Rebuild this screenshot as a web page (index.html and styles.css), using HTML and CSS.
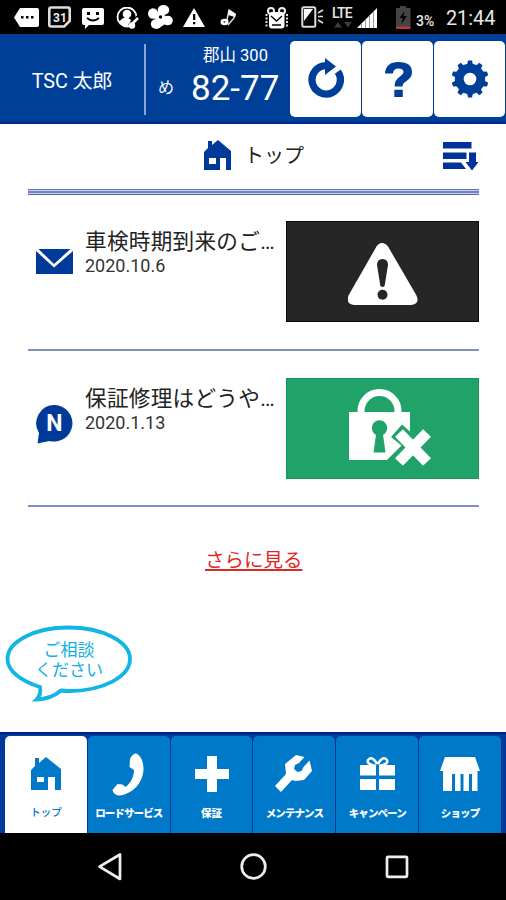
FILE: index.html
```html
<!DOCTYPE html>
<html lang="ja">
<head>
<meta charset="utf-8">
<title>トップ</title>
<link rel="stylesheet" href="styles.css">
</head>
<body>
<div class="screen">
  <div class="status">
    <svg class="s-tag" width="25" height="19" viewBox="14 8 25 19"><path fill="#fff" d="M20 8h17q2 0 2 2v15q0 2-2 2H20l-6-9.500z"/><path fill="#000" d="M21 16h2.500v2.500H21zM26 16h2.500v2.500H26zM31 16h2.500v2.500H31z"/></svg>
    <svg class="s-cal" width="23" height="22" viewBox="48 6 23 22"><path fill="#000" stroke="#ddd" stroke-width="2.600" d="M51 7.500h17q1.700 0 1.700 1.700V21l-5.500 5.500H51q-1.700 0-1.700-1.700V9.200q0-1.700 1.700-1.700z"/><text class="cal-num" x="53" y="21.500">31</text></svg>
    <svg class="s-msg" width="23" height="21" viewBox="82 8 23 21"><path fill="#fff" d="M84 8h18q2 0 2 2v13q0 2-2 2H89l-4 4v-4h-1q-2 0-2-2V10q0-2 2-2z"/><path fill="#000" d="M87 12h3v3h-3zM96 12h3v3h-3z"/><path stroke="#000" stroke-width="1.800" fill="none" d="M87 18q6 5 12 0"/></svg>
    <svg class="s-user" width="24" height="23" viewBox="116 7 24 23"><circle cx="127" cy="17" r="9.500" fill="#000" stroke="#fff" stroke-width="1.800"/><circle cx="127" cy="14" r="4.300" fill="#fff"/><path fill="#fff" d="M119 22q4-5 8-5l4 3-3 7q-6 0-9-5z"/><path stroke="#000" stroke-width="5" d="m139 17-9 9"/><path stroke="#fff" stroke-width="2.500" fill="none" d="m138 18-6 6"/><circle cx="132" cy="25.500" r="3.200" fill="#fff"/></svg>
    <svg class="s-fan" width="26" height="25" viewBox="148 5 26 25"><g fill="#fff"><ellipse cx="163.500" cy="10" rx="5.800" ry="5"/><ellipse cx="153" cy="13.500" rx="5" ry="5.300"/><ellipse cx="167.800" cy="20.500" rx="5" ry="4.800"/><ellipse cx="156.300" cy="24" rx="5.500" ry="5"/><path d="m152 17 8-7 10 11-11 7 1-7z"/></g><circle cx="160.500" cy="17" r="1.700" fill="#000"/></svg>
    <svg class="s-warn" width="22" height="19" viewBox="183 8 22 19"><path fill="#fff" d="m194 8 11 19h-22z"/><path fill="#000" d="M193 14h2.300v6H193zM193 22h2.300v2.300H193z"/></svg>
    <svg class="s-note" width="17" height="18" viewBox="220 9 17 18"><path fill="none" stroke="#ddd" stroke-width="1.500" d="m227 20 2-10 6 4-1 4-6 7"/><ellipse cx="224.500" cy="22" rx="4" ry="3.300" fill="#fff"/><path fill="#fff" d="m229 10 7 4-1 3-7-2z"/><circle cx="224.500" cy="22" r="1" fill="#555"/></svg>
    <svg class="s-gift" width="23" height="23" viewBox="265 6 23 23"><circle cx="271" cy="11" r="3" fill="none" stroke="#eee" stroke-width="2"/><circle cx="282" cy="11" r="3" fill="none" stroke="#eee" stroke-width="2"/><rect x="269" y="12" width="15.500" height="16.500" rx="3" fill="#fff"/><path stroke="#000" stroke-width="1.300" fill="none" d="m271 16 5.500 5 5.500-5M272 25h9"/><path stroke="#ddd" stroke-width="2" stroke-dasharray="2 1.500" d="M266.500 14v14M287 14v14"/></svg>
    <svg class="s-phone" width="23" height="22" viewBox="301 6 23 22"><rect x="302.300" y="7.300" width="13" height="19.500" rx="1.500" fill="#000" stroke="#ddd" stroke-width="2"/><path fill="#fff" d="M304 9h9l-9 12z"/><path stroke="#ddd" stroke-width="1.600" d="m318 13 5-3M318 16.500h5M318 20l5 3"/></svg>
    <div class="lte"><span>LTE</span><svg width="18" height="6" viewBox="0 0 18 6"><path fill="#3c3c3c" d="M0 5.500 4 0l4 5.500zM10 0h8l-4 5.500z"/></svg></div>
    <svg class="s-signal" width="21" height="20" viewBox="357 8 21 20"><path fill="#fff" d="M377 8v20h-20z"/><path stroke="#999" d="M361.500 23v5M365.500 19v9M369.500 15v13M373.500 11v17"/></svg>
    <svg class="s-batt" width="15" height="23" viewBox="396 6 15 23"><path fill="#444" d="M400 6h6v2h4.500v19H396V8h4z"/><path fill="#b83a32" d="M396 26.500h14.500V29H396z"/><path fill="#000" d="m404.500 11-5 7h3l-1 6 5.500-8h-3.500z"/></svg>
    <span class="pct">3%</span>
    <span class="clock">21:44</span>
  </div>

  <header class="header">
    <div class="user">TSC 太郎</div>
    <div class="plate">
      <span class="kana">め</span>
      <div class="plate-main"><span class="region">郡山 300</span><span class="number">82-77</span></div>
    </div>
    <div class="actions">
      <div class="action"><svg width="40" height="44" viewBox="305 57 40 44"><path fill="none" stroke="#003f98" stroke-width="7.300" d="M336.800 71.600A14.200 14.200 0 1 1 325 65.600"/><path fill="#003f98" d="m324 58 11 8.500-11 8.500z"/></svg></div>
      <div class="action"><svg width="30" height="38" viewBox="382 60 30 38"><path fill="#003f98" d="M384 73.500q.8-11.500 13.500-11.500Q411 62 411 72.300q0 5.200-5.500 8.700-4 2.300-4 5.500h-8q0-6.500 5.500-10 3.500-2 3.500-4.300 0-3.700-5-3.700-5.200 0-5.500 5zM393.300 89.700h8.500V97h-8.500z"/></svg></div>
      <div class="action"><svg width="38" height="38" viewBox="-19 -19 38 38"><g fill="#003f98"><circle r="15.200"/><path d="M-3-14l1-4.500h4l1 4.500zM-3 14l1 4.500h4l1-4.500z"/><path transform="rotate(36)" d="M-3-14l1-4.500h4l1 4.500zM-3 14l1 4.500h4l1-4.500z"/><path transform="rotate(72)" d="M-3-14l1-4.500h4l1 4.500zM-3 14l1 4.500h4l1-4.500z"/><path transform="rotate(108)" d="M-3-14l1-4.500h4l1 4.500zM-3 14l1 4.500h4l1-4.500z"/><path transform="rotate(144)" d="M-3-14l1-4.500h4l1 4.500zM-3 14l1 4.500h4l1-4.500z"/></g><circle r="6.300" fill="#fff"/></svg></div>
    </div>
  </header>

  <main class="main">
    <div class="title-row">
      <div class="title"><svg width="28" height="30" viewBox="0 0 28 30"><path fill="#003a98" fill-rule="evenodd" d="M4 1h4v4l6-5 13 11v19h-5V18h-6v12H0V12l4-4zM5 18v6h7v-6z"/></svg><span>トップ</span></div>
      <svg class="sort" width="36" height="29" viewBox="0 0 36 29"><path fill="#00329a" d="M0 0h28.500v6.500H0zM0 10.500h23.500V17H0zM0 20.500h18l5 6.500H0zM26 10.500h7V20h2.500L29 28.500 22.500 20H26z"/></svg>
    </div>
    <div class="rule"></div>

    <article class="item">
      <svg class="item-icon" width="37" height="25" viewBox="0 0 37 25"><path fill="#003a98" d="M2.500 0h32L18 15zM0 2l18 16.500L37 2v23H0z"/></svg>
      <div class="item-text"><h2>車検時期到来のご…</h2><time>2020.10.6</time></div>
      <div class="thumb dark"><svg width="70" height="64" viewBox="348 241 70 64"><path fill="#fff" d="M376.500 245.500q2-3.500 5.500-3.500t6 3.500l28.500 49q3.500 8.500-5 9.500H354q-8.500-1-5.500-9.500z"/><path fill="#262626" d="M377 264q0-6 5.500-6t5.500 6l-3.300 20.500q-2.200 3-4.400 0z"/><circle cx="382.500" cy="293.700" r="5" fill="#262626"/></svg></div>
    </article>

    <article class="item">
      <svg class="item-icon bubble-n" width="37" height="39" viewBox="0 0 37 39"><path fill="#003a98" d="M18.500 0a18.300 18.300 0 1 1-5 36Q7 37 1.500 38.500L3 28A18.300 18.300 0 0 1 18.500 0z"/><text x="18.300" y="26">N</text></svg>
      <div class="item-text"><h2>保証修理はどうや…</h2><time>2020.1.13</time></div>
      <div class="thumb green"><svg width="84" height="78" viewBox="348 389 84 78"><path fill="none" stroke="#fff" stroke-width="7" d="M361 414v-3a18.500 18.500 0 0 1 37 0v3"/><path fill="#fff" d="M349 412h61v48h-61z"/><path fill="#20a268" d="m391 437 11-12.500 9 8 5 34h-30l-1.500-4 17-17z"/><circle cx="379.500" cy="428" r="7.700" fill="#20a268"/><path fill="#20a268" d="M376.500 431h6l3 21.500h-12z"/><path stroke="#fff" stroke-width="11" d="m399 433 28 29M427 433l-28 29"/></svg></div>
    </article>

    <a class="more">さらに見る</a>

    <div class="consult">
      <svg width="128" height="78" viewBox="5 624 128 78"><path fill="#fff" stroke="#12b5e4" stroke-width="3.800" d="M40 687C21 681 7.500 671 7.500 659c0-17.500 27-31.500 61-31.500s61.500 14 61.500 31.500-27 32-61 32q-4.500 0-8-.5-10 8.500-24.500 9 5-5 3.500-12.500z"/></svg>
      <div class="consult-text">ご相談<br>ください</div>
    </div>
  </main>

  <nav class="tabs">
    <div class="tab active"><svg width="30" height="34" viewBox="0 -1 30 34"><path fill="#0079c8" fill-rule="evenodd" d="M4 0h4v5l7-6 15 12v21h-6V19h-7v13H0V12l4-4zM6 19v5h7v-5z"/></svg><span>トップ</span></div>
    <div class="tab"><svg width="34" height="43" viewBox="113 751 34 43"><path fill="#fff" d="M131 757q2.500-5.500 6-5.500c4 1.500 7.500 7 7.500 15 0 14-11 26-24.500 27-3 0-6-2.500-6.500-5.500l5-6 5 .5 3 2.500c5-4 8.500-10 8.500-17l-4.500-3z"/></svg><span class="tight">ロードサービス</span></div>
    <div class="tab"><svg width="34" height="36" viewBox="0 0 34 36"><path fill="#fff" d="M12 0h10v13h12v10H22v13H12V23H0V13h12z"/></svg><span>保証</span></div>
    <div class="tab"><svg width="38" height="38" viewBox="276 755 38 38"><path fill="#fff" d="m297 755 8.500 2-5.500 6-4 2-1 4 3.500 3 4-1 2-4 6-6.500L313 771l-8 9-9 1-3-1-11 12-6-6 11-12-1-10z"/></svg><span class="tight">メンテナンス</span></div>
    <div class="tab"><svg width="35" height="34" viewBox="0 0 35 34"><path fill="#fff" d="M0 8h16v10.500H0zM19 8h16v10.500H19zM0 22h16v11H0zM19 22h16v11H19z"/><path fill="none" stroke="#fff" stroke-width="2.500" d="M16 9Q6 7 8 3q4-4.500 8.500 3h2Q23-1.500 27 3q2 4-8 6"/></svg><span class="tight">キャンペーン</span></div>
    <div class="tab"><svg width="40" height="34" viewBox="0 0 40 34"><path fill="#fff" d="M5 0h30l5 14h-2.500v20H32V17h-3v17h-5.500V17h-3v17h-5.500V17h-3v17H3V14H0z"/></svg><span class="tight">ショップ</span></div>
  </nav>

  <div class="sysnav">
    <svg width="506" height="67" viewBox="0 833 506 67" fill="none" stroke="#eee" stroke-width="2.700"><path d="M120 854.500v24.500l-20.500-12.300z" stroke-linejoin="round"/><circle cx="253.500" cy="866.500" r="11.800"/><rect x="387" y="856.800" width="20" height="20" rx="1"/></svg>
  </div>
</div>
</body>
</html>
```

FILE: styles.css
```css
* { box-sizing: border-box; }
body { margin: 0; font-family: Roboto, "Noto Sans CJK JP", sans-serif; background: #fff; }
svg { display: block; flex: none; }
.screen { width: 506px; height: 900px; display: flex; flex-direction: column; overflow: hidden; }

.status { height: 34px; background: #000; display: flex; align-items: flex-start; color: #e8e8e8; flex: none; }
.s-tag { margin: 8px 0 0 14px; }
.s-cal { margin: 6px 0 0 9px; }
.cal-num { font: 700 12px Roboto, sans-serif; fill: #eee; }
.s-msg { margin: 8px 0 0 11px; }
.s-user { margin: 7px 0 0 11px; }
.s-fan { margin: 5px 0 0 8px; }
.s-warn { margin: 8px 0 0 9px; }
.s-note { margin: 9px 0 0 15px; }
.s-gift { margin: 6px 0 0 28px; }
.s-phone { margin: 6px 0 0 13px; }
.lte { margin: 5px 0 0 8px; width: 22px; font-size: 14px; line-height: 16px; font-weight: 500; letter-spacing: -0.8px; flex: none; }
.lte svg { margin: 1px 0 0 2px; }
.s-signal { margin: 8px 0 0 3px; }
.s-batt { margin: 6px 0 0 18px; }
.pct { margin: 13px 0 0 5px; width: 25px; font-size: 14px; line-height: 16px; font-weight: 500; }
.clock { margin: 7px 0 0 5px; font-size: 19.800px; line-height: 23px; }

.header { height: 90px; background: #003f98; border-bottom: 2px solid #00288c; display: flex; color: #fff; flex: none; padding-top: 7px; }
.user { width: 146px; height: 71px; margin-top: 3px; border-right: 2px solid #8aa4d6; display: flex; align-items: center; justify-content: center; font-size: 19.800px; padding-bottom: 1px; }
.plate { width: 144px; display: flex; padding-left: 12px; }
.kana { width: 16px; padding-top: 35px; font-size: 16px; line-height: 24px; }
.plate-main { display: flex; flex-direction: column; width: 108px; padding-left: 17px; }
.region { margin: 4px 0 0 12px; font-size: 16.500px; line-height: 22px; white-space: nowrap; }
.number { font-size: 35px; line-height: 42px; margin-top: 1px; white-space: nowrap; }
.actions { display: flex; gap: 1px; }
.action { width: 71px; height: 76px; background: #fff; border-radius: 5px; display: flex; align-items: center; justify-content: center; }

.main { height: 608px; padding: 0 27px 0 28px; position: relative; flex: none; }
.title-row { height: 65px; display: flex; justify-content: space-between; padding-left: 176px; }
.title { display: flex; gap: 12px; padding-top: 16px; }
.title span { font-size: 20px; line-height: 32px; color: #222; }
.sort { margin: 18px 0 0; }
.rule { height: 6px; background: linear-gradient(#5f74b0 0 1px, #c4cff0 1px 2px, #6f84bc 2px 4px, #c4cff0 4px 5px, #5569a8 5px); }
.item { height: 156px; border-bottom: 2px solid #7f90bc; display: flex; padding-top: 27px; }
.rule + .item { padding-top: 26px; }
.item-icon { margin: 28px 0 0 8px; }
.bubble-n { margin-top: 27px; }
.bubble-n text { font: 700 23px Roboto, sans-serif; fill: #fff; text-anchor: middle; }
.item-text { width: 201px; padding: 6px 0 0 12px; flex: 1; color: #222; }
.item-text h2 { margin: 0; font-weight: 400; font-size: 21.600px; line-height: 30px; letter-spacing: 0.3px; white-space: nowrap; }
.item-text time { display: block; font-size: 18px; line-height: 20px; margin-top: -1px; color: #333; }
.thumb { width: 193px; height: 101px; display: flex; align-items: center; justify-content: center; flex: none; }
.dark { background: #262626; border: 1px solid #0a0a0a; padding-top: 4px; }
.green { background: #20a268; border: 1px solid #16945a; padding: 0 0 1px 14px; }
.more { display: block; width: max-content; margin: 40px auto 0 177px; font-size: 19.500px; line-height: 28px; color: #df2824; text-decoration: underline; text-underline-offset: 2px; text-decoration-thickness: 1.500px; }
.consult { position: absolute; left: 5px; top: 500px; width: 128px; height: 78px; }
.consult-text { position: absolute; inset: 16px 0 auto; text-align: center; color: #12b0e2; font-size: 17px; line-height: 20px; }

.tabs { height: 101px; background: #00399a; border-top: 2px solid #001f88; padding: 2px 5px 0; display: flex; gap: 1px; flex: none; }
.tab { flex: 1; background: #0079c8; color: #fff; border-radius: 5px 5px 0 0; display: grid; grid-template-rows: 76px 1fr; justify-items: center; align-items: center; }
.tab span { font-size: 10.500px; line-height: 14px; font-weight: 900; white-space: nowrap; align-self: start; margin-top: -5px; }
.tab .tight { letter-spacing: -0.9px; }
.tab.active span { font-weight: 500; margin-top: -6px; }
.active { background: #fff; color: #0079c8; }
.sysnav { height: 67px; background: #000; flex: none; }
```
